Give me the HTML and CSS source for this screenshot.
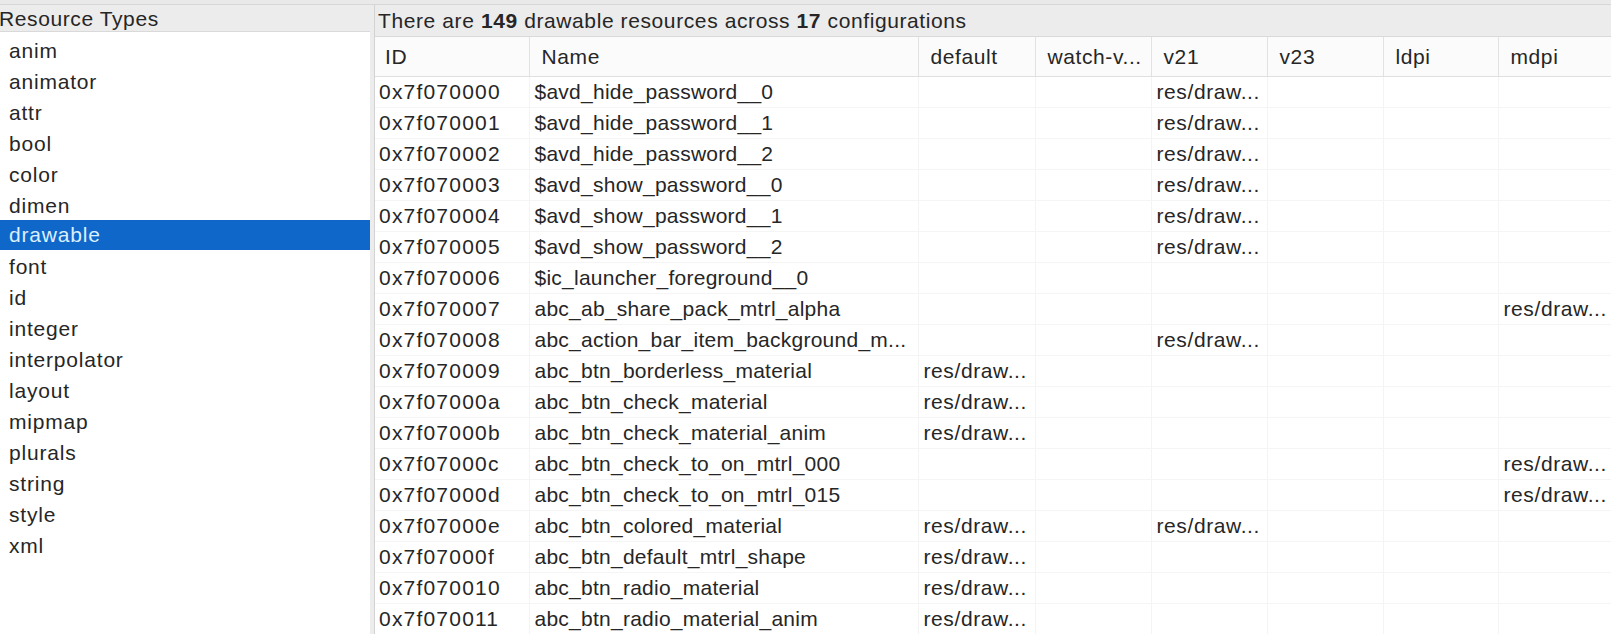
FILE: index.html
```html
<!DOCTYPE html>
<html lang="en">
<head>
<meta charset="utf-8">
<title>Resources</title>
<link rel="stylesheet" href="styles.css">
</head>
<body>
<div class="top-strip"></div>
<div class="main">
  <aside class="types">
    <div class="types-header">Resource Types</div>
    <ul class="types-list">
      <li>anim</li>
      <li>animator</li>
      <li>attr</li>
      <li>bool</li>
      <li>color</li>
      <li>dimen</li>
      <li class="selected">drawable</li>
      <li>font</li>
      <li>id</li>
      <li>integer</li>
      <li>interpolator</li>
      <li>layout</li>
      <li>mipmap</li>
      <li>plurals</li>
      <li>string</li>
      <li>style</li>
      <li>xml</li>
    </ul>
  </aside>
  <div class="divider"></div>
  <section class="resources">
    <div class="summary">There are <b>149</b> drawable resources across <b>17</b> configurations</div>
    <table class="grid">
      <colgroup>
        <col class="c-id"><col class="c-name"><col class="c-default"><col class="c-watch"><col class="c-v21"><col class="c-v23"><col class="c-ldpi"><col class="c-mdpi">
      </colgroup>
      <thead>
        <tr><th class="h-id">ID</th><th>Name</th><th>default</th><th>watch-v...</th><th>v21</th><th>v23</th><th>ldpi</th><th>mdpi</th></tr>
      </thead>
      <tbody>
        <tr><td class="id">0x7f070000</td><td class="name">$avd_hide_password__0</td><td></td><td></td><td>res/draw...</td><td></td><td></td><td></td></tr>
        <tr><td class="id">0x7f070001</td><td class="name">$avd_hide_password__1</td><td></td><td></td><td>res/draw...</td><td></td><td></td><td></td></tr>
        <tr><td class="id">0x7f070002</td><td class="name">$avd_hide_password__2</td><td></td><td></td><td>res/draw...</td><td></td><td></td><td></td></tr>
        <tr><td class="id">0x7f070003</td><td class="name">$avd_show_password__0</td><td></td><td></td><td>res/draw...</td><td></td><td></td><td></td></tr>
        <tr><td class="id">0x7f070004</td><td class="name">$avd_show_password__1</td><td></td><td></td><td>res/draw...</td><td></td><td></td><td></td></tr>
        <tr><td class="id">0x7f070005</td><td class="name">$avd_show_password__2</td><td></td><td></td><td>res/draw...</td><td></td><td></td><td></td></tr>
        <tr><td class="id">0x7f070006</td><td class="name">$ic_launcher_foreground__0</td><td></td><td></td><td></td><td></td><td></td><td></td></tr>
        <tr><td class="id">0x7f070007</td><td class="name">abc_ab_share_pack_mtrl_alpha</td><td></td><td></td><td></td><td></td><td></td><td>res/draw...</td></tr>
        <tr><td class="id">0x7f070008</td><td class="name">abc_action_bar_item_background_m...</td><td></td><td></td><td>res/draw...</td><td></td><td></td><td></td></tr>
        <tr><td class="id">0x7f070009</td><td class="name">abc_btn_borderless_material</td><td>res/draw...</td><td></td><td></td><td></td><td></td><td></td></tr>
        <tr><td class="id">0x7f07000a</td><td class="name">abc_btn_check_material</td><td>res/draw...</td><td></td><td></td><td></td><td></td><td></td></tr>
        <tr><td class="id">0x7f07000b</td><td class="name">abc_btn_check_material_anim</td><td>res/draw...</td><td></td><td></td><td></td><td></td><td></td></tr>
        <tr><td class="id">0x7f07000c</td><td class="name">abc_btn_check_to_on_mtrl_000</td><td></td><td></td><td></td><td></td><td></td><td>res/draw...</td></tr>
        <tr><td class="id">0x7f07000d</td><td class="name">abc_btn_check_to_on_mtrl_015</td><td></td><td></td><td></td><td></td><td></td><td>res/draw...</td></tr>
        <tr><td class="id">0x7f07000e</td><td class="name">abc_btn_colored_material</td><td>res/draw...</td><td></td><td>res/draw...</td><td></td><td></td><td></td></tr>
        <tr><td class="id">0x7f07000f</td><td class="name">abc_btn_default_mtrl_shape</td><td>res/draw...</td><td></td><td></td><td></td><td></td><td></td></tr>
        <tr><td class="id">0x7f070010</td><td class="name">abc_btn_radio_material</td><td>res/draw...</td><td></td><td></td><td></td><td></td><td></td></tr>
        <tr><td class="id">0x7f070011</td><td class="name">abc_btn_radio_material_anim</td><td>res/draw...</td><td></td><td></td><td></td><td></td><td></td></tr>
      </tbody>
    </table>
  </section>
</div>
</body>
</html>
```

FILE: styles.css
```css
html, body {
  margin: 0;
  padding: 0;
  background: #ffffff;
  overflow: hidden;
}

body {
  width: 1611px;
  height: 634px;
  font-family: "Liberation Sans", Arial, sans-serif;
  font-size: 21px;
  letter-spacing: 0.6px;
  color: #262626;
}

.top-strip {
  height: 4px;
  background: #e9e9e9;
  border-bottom: 1px solid #d7d7d7;
}

.main {
  display: flex;
  height: 629px;
}

.types {
  width: 370px;
  flex: none;
  background: #ffffff;
}

.types-header {
  height: 26px;
  line-height: 27px;
  background: #ececec;
  border-bottom: 1px solid #d9d9d9;
  margin-left: -1px;
  white-space: nowrap;
}

.types-list {
  list-style: none;
  margin: 0;
  padding: 3px 0 0 0;
}

.types-list li {
  height: 31px;
  line-height: 31px;
  padding-left: 9px;
  letter-spacing: 0.8px;
  white-space: nowrap;
}

.types-list li.selected {
  background: #0f67ca;
  color: #dcefff;
  height: 30px;
  line-height: 30px;
  margin-top: -1px;
  margin-bottom: 1px;
}

.divider {
  width: 4px;
  flex: none;
  background: #ececec;
  border-right: 1px solid #d3d3d3;
}

.resources {
  flex: 1;
  min-width: 0;
  overflow: hidden;
}

.summary {
  height: 31px;
  line-height: 32px;
  padding-left: 3px;
  background: #ececec;
  border-bottom: 1px solid #d9d9d9;
  white-space: nowrap;
}

.summary b {
  font-weight: 700;
}

.grid {
  border-collapse: collapse;
  table-layout: fixed;
  width: 1236px;
}

.c-id { width: 154px; }
.c-name { width: 389px; }
.c-default { width: 117px; }
.c-watch { width: 116px; }
.c-v21 { width: 116px; }
.c-v23 { width: 116px; }
.c-ldpi { width: 115px; }
.c-mdpi { width: 113px; }

.grid th {
  height: 39px;
  padding: 0 0 0 12px;
  text-align: left;
  font-weight: 400;
  background: #fbfbfb;
  border-bottom: 1px solid #e0e0e0;
  border-left: 1px solid #e2e2e2;
  white-space: nowrap;
  overflow: hidden;
}

.grid th.h-id {
  border-left: none;
  padding-left: 10px;
}

.grid td {
  height: 30px;
  padding: 0 0 0 5px;
  line-height: 30px;
  border-bottom: 1px solid #f5f5f5;
  border-left: 1px solid #f4f4f4;
  white-space: nowrap;
  overflow: hidden;
}

.grid td.name {
  letter-spacing: 0.25px;
}

.grid td.id {
  border-left: none;
  padding-left: 4px;
  letter-spacing: 1.2px;
}
```
